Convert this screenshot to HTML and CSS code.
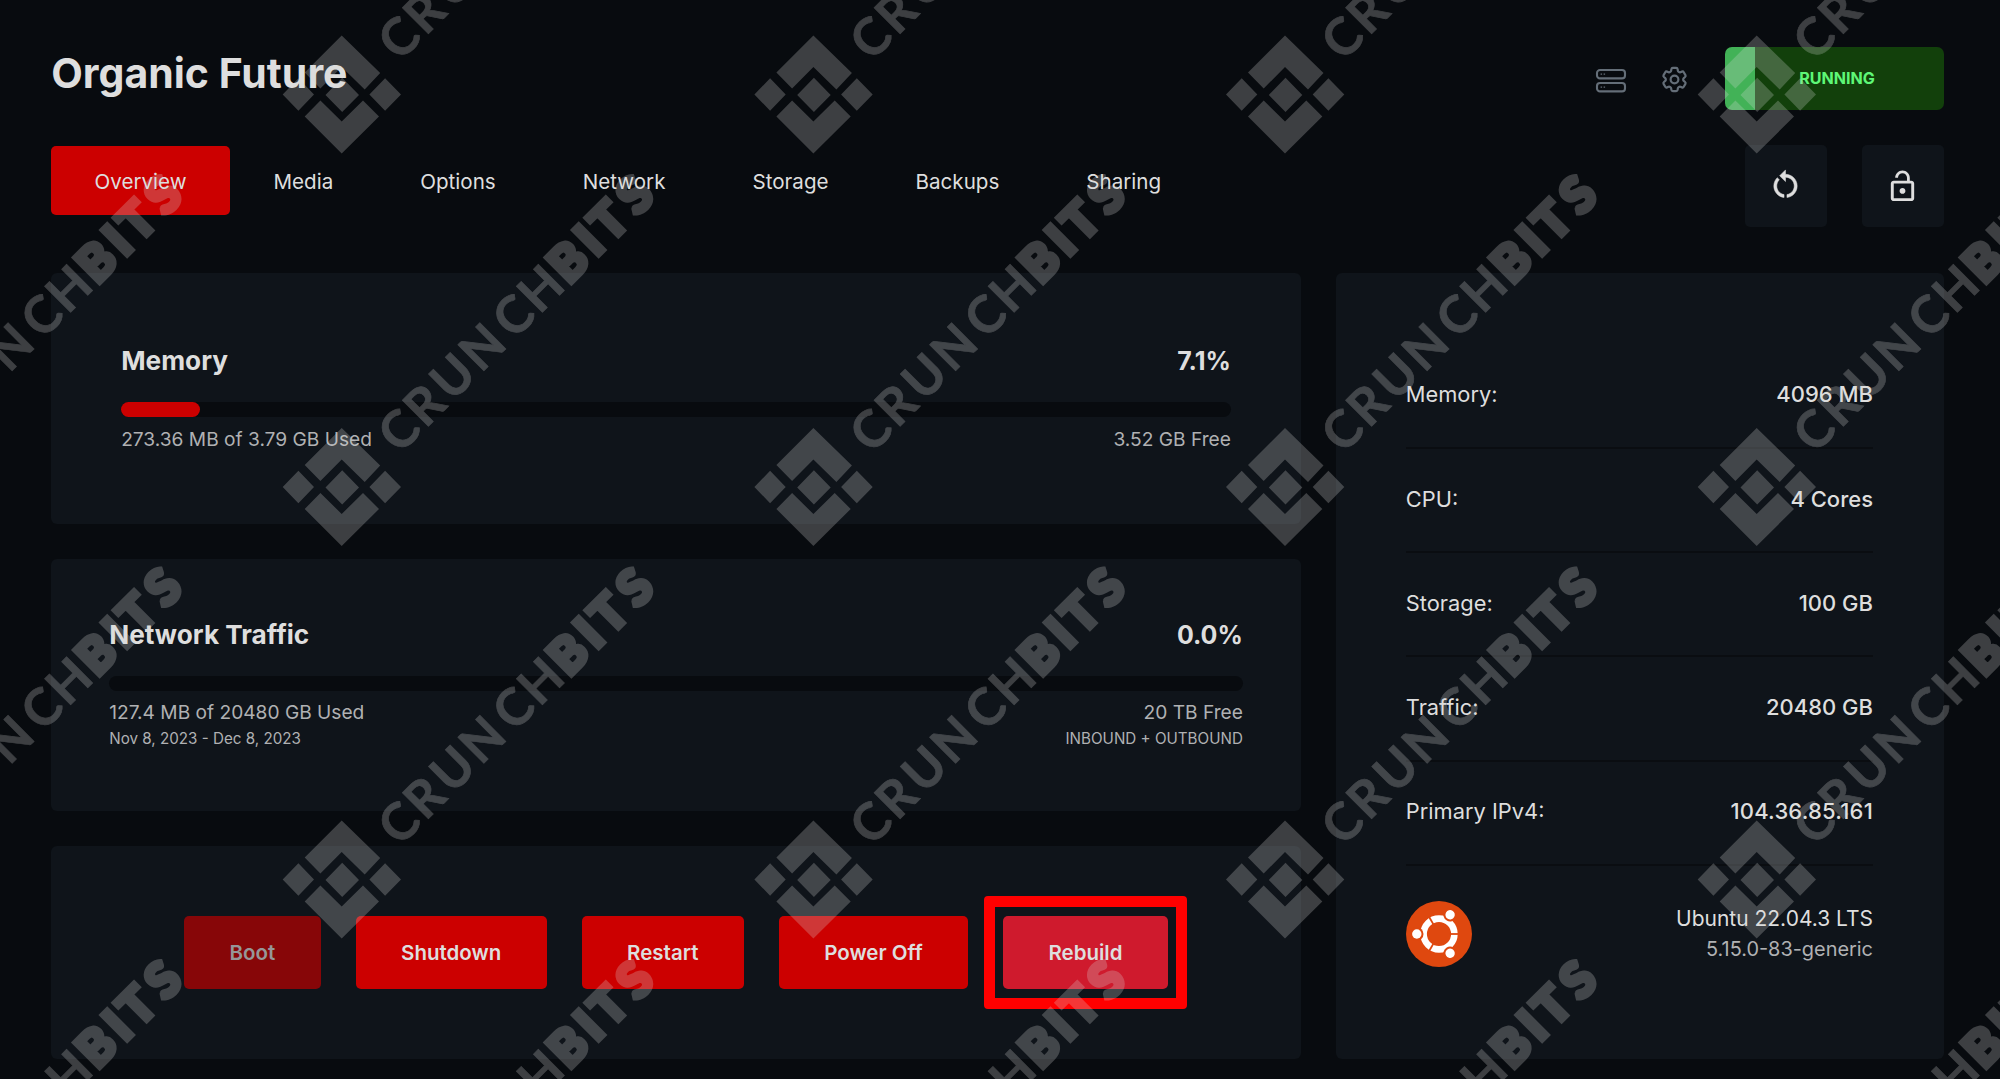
FILE: index.html
```html
<!DOCTYPE html>
<html lang="en">
<head>
<meta charset="utf-8">
<title>Organic Future</title>
<link rel="stylesheet" href="styles.css">
</head>
<body>
<main class="page">
  <header class="header">
    <h1 class="title">Organic Future</h1>
    <div class="header-side">
      <svg class="icon-server" viewBox="0 0 32 26" fill="none" stroke="currentColor" stroke-width="2.1">
        <rect x="2" y="2" width="28" height="8.4" rx="3"/>
        <rect x="2" y="15" width="28" height="8.4" rx="3"/>
        <path d="M5.6 6.2h1.5M8.6 6.2h1.5M5.6 19.2h1.5M8.6 19.2h1.5" stroke-width="1.3"/>
      </svg>
      <svg class="icon-gear" viewBox="0 0 24 24" fill="none" stroke="currentColor" stroke-width="1.7" stroke-linejoin="round">
        <path d="M9.594 3.94c.09-.542.56-.94 1.11-.94h2.593c.55 0 1.02.398 1.11.94l.213 1.281c.063.374.313.686.645.87.074.04.147.083.22.127.325.196.72.257 1.075.124l1.217-.456a1.125 1.125 0 0 1 1.37.49l1.296 2.247a1.125 1.125 0 0 1-.26 1.431l-1.003.827c-.293.241-.438.613-.43.992a7.723 7.723 0 0 1 0 .255c-.008.378.137.75.43.991l1.004.827c.424.35.534.955.26 1.43l-1.298 2.247a1.125 1.125 0 0 1-1.369.491l-1.217-.456c-.355-.133-.75-.072-1.076.124a6.47 6.47 0 0 1-.22.128c-.331.183-.581.495-.644.869l-.213 1.281c-.09.543-.56.94-1.11.94h-2.594c-.55 0-1.019-.398-1.11-.94l-.213-1.281c-.062-.374-.312-.686-.644-.87a6.52 6.52 0 0 1-.22-.127c-.325-.196-.72-.257-1.076-.124l-1.217.456a1.125 1.125 0 0 1-1.369-.49l-1.297-2.247a1.125 1.125 0 0 1 .26-1.431l1.004-.827c.292-.24.437-.613.43-.991a6.932 6.932 0 0 1 0-.255c.007-.38-.138-.751-.43-.992l-1.004-.827a1.125 1.125 0 0 1-.26-1.43l1.297-2.247a1.125 1.125 0 0 1 1.37-.491l1.216.456c.356.133.751.072 1.076-.124.072-.044.146-.086.22-.128.332-.183.582-.495.644-.869l.214-1.28Z"/>
        <circle cx="12" cy="12" r="3"/>
      </svg>
      <div class="status">RUNNING</div>
    </div>
  </header>

  <div class="toolbar">
    <nav class="tabs">
      <a class="tab tab-active">Overview</a>
      <a class="tab">Media</a>
      <a class="tab">Options</a>
      <a class="tab">Network</a>
      <a class="tab">Storage</a>
      <a class="tab">Backups</a>
      <a class="tab">Sharing</a>
    </nav>
    <div class="tools">
      <div class="tool">
        <svg class="tool-icon tool-icon-restart" viewBox="0 0 24 24" fill="currentColor"><path d="M12 5V2L8 6l4 4V7c3.31 0 6 2.69 6 6 0 2.97-2.17 5.43-5 5.91v2.02c3.95-.49 7-3.85 7-7.93 0-4.42-3.58-8-8-8zm-6 8c0-1.65.67-3.15 1.76-4.24L6.34 7.34C4.9 8.79 4 10.79 4 13c0 4.08 3.05 7.44 7 7.93v-2.02c-2.83-.48-5-2.94-5-5.91z"/></svg>
      </div>
      <div class="tool">
        <svg class="tool-icon" viewBox="0 0 24 24" fill="currentColor"><path d="M12 17c1.1 0 2-.9 2-2s-.9-2-2-2-2 .9-2 2 .9 2 2 2zm6-9h-1V6c0-2.76-2.24-5-5-5S7 3.24 7 6h1.9c0-1.71 1.39-3.1 3.1-3.1 1.71 0 3.1 1.39 3.1 3.1v2H6c-1.1 0-2 .9-2 2v10c0 1.1.9 2 2 2h12c1.1 0 2-.9 2-2V10c0-1.1-.9-2-2-2zm0 12H6V10h12v10z"/></svg>
      </div>
    </div>
  </div>

  <div class="content">
    <div class="column">
      <section class="card usage usage-memory">
        <div class="usage-head"><h2>Memory</h2><span class="usage-value">7.1%</span></div>
        <div class="bar"><div class="bar-fill" style="width:7.1%"></div></div>
        <div class="usage-row"><span>273.36 MB of 3.79 GB Used</span><span>3.52 GB Free</span></div>
      </section>
      <section class="card usage usage-traffic">
        <div class="usage-head"><h2>Network Traffic</h2><span class="usage-value">0.0%</span></div>
        <div class="bar"></div>
        <div class="usage-row"><span>127.4 MB of 20480 GB Used</span><span>20 TB Free</span></div>
        <div class="usage-note"><span>Nov 8, 2023 - Dec 8, 2023</span><span>INBOUND + OUTBOUND</span></div>
      </section>
      <section class="card actions">
        <button class="btn btn-disabled">Boot</button>
        <button class="btn">Shutdown</button>
        <button class="btn">Restart</button>
        <button class="btn">Power Off</button>
        <button class="btn btn-hover">Rebuild</button>
      </section>
    </div>

    <aside class="card specs">
      <div class="spec"><span>Memory:</span><b>4096 MB</b></div>
      <div class="spec"><span>CPU:</span><b>4 Cores</b></div>
      <div class="spec"><span>Storage:</span><b>100 GB</b></div>
      <div class="spec"><span>Traffic:</span><b>20480 GB</b></div>
      <div class="spec"><span>Primary IPv4:</span><b class="spec-ip">104.36.85.161</b></div>
      <div class="os">
        <svg class="os-logo" viewBox="-33 -33 66 66">
          <circle r="33" fill="#df480f"/>
          <circle r="15.4" fill="none" stroke="#fff" stroke-width="6.6"/>
          <g id="arm">
            <path d="M10 0h10" stroke="#df480f" stroke-width="1.8"/>
            <circle cx="-22.2" r="6.7" fill="#df480f"/>
            <circle cx="-22.2" r="4.7" fill="#fff"/>
          </g>
          <use href="#arm" transform="rotate(120)"/>
          <use href="#arm" transform="rotate(240)"/>
        </svg>
        <div class="os-text">
          <span class="os-name">Ubuntu 22.04.3 LTS</span>
          <span class="os-kernel">5.15.0-83-generic</span>
        </div>
      </div>
    </aside>
  </div>
</main>

<svg class="watermark" viewBox="0 0 2000 1079">
  <defs>
    <g id="mark">
      <path d="M0-59 38.5-21.5 23-5 0-27.5-21.3-6-37-22ZM.5-16.8 17.3.4.5 17.5-16.2.4ZM-59 0-43.3-16.2-27.7 0-43.3 16.2ZM27.7 0 43.4-16.2 59.3 0 43.4 16.2ZM-37 22-21.3 6 0 27 21.3 6 37.3 22 0 59Z"/>
      <g transform="rotate(-45)">
        <text class="wm-light" y="18.4" x="80.5 116.5 156.5 198.2 242.4 281">CRUNCH</text>
        <text class="wm-heavy" y="17.8" x="319.5 349.4 377 413.5">BITS</text>
      </g>
    </g>
    <g id="mark-row">
      <use href="#mark" x="-130"/>
      <use href="#mark" x="341.7"/>
      <use href="#mark" x="813.4"/>
      <use href="#mark" x="1285"/>
      <use href="#mark" x="1756.7"/>
    </g>
  </defs>
  <use href="#mark-row" y="94.5"/>
  <use href="#mark-row" y="487"/>
  <use href="#mark-row" y="879.5"/>
  <use href="#mark-row" y="1272"/>
</svg>
</body>
</html>
```
FILE: styles.css
```css
* { box-sizing: border-box; }

body {
  margin: 0;
  background: #080b0f;
  color: #dedede;
  font-family: Inter, "Liberation Sans", sans-serif;
  position: relative;
}

.page {
  height: 1079px;
  padding: 47px 56.5px 20px 51.2px;
  display: flex;
  flex-direction: column;
  overflow: hidden;
}

.header {
  height: 63px;
  display: flex;
  justify-content: space-between;
}

.title {
  margin: 0;
  font-size: 41px;
  font-weight: 700;
  line-height: 53px;
}

.header-side {
  display: flex;
  align-items: center;
  color: #646e78;
}

.icon-server { width: 32px; height: 26px; margin: 4px 32px 0 0; }
.icon-gear { width: 31px; height: 31px; margin: 1px 35px 0 0; }

.status {
  width: 219px;
  height: 63px;
  border-radius: 7px;
  background: linear-gradient(90deg, #42b257 29.5px, #12400b 29.5px);
  color: #5ef777;
  font-size: 16.1px;
  font-weight: 700;
  line-height: 62px;
  text-align: center;
  padding-left: 6px;
}

.toolbar {
  margin-top: 35px;
  height: 82px;
  display: flex;
  justify-content: space-between;
}

.tabs { display: flex; margin-top: 1px; }

.tab {
  height: 69px;
  padding: 1px 43.35px 0;
  border-radius: 5px;
  font-size: 20.6px;
  line-height: 69px;
}

.tab + .tab { padding: 1px 43.5px 0; }

.tab-active { background: #cc0000; }

.tools { display: flex; gap: 35px; }

.tool {
  width: 82px;
  height: 82px;
  border-radius: 5px;
  background: #0f141a;
  display: grid;
  place-items: center;
}

.tool-icon { width: 35px; height: 35px; display: block; }
.tool-icon-restart { margin-bottom: 4px; stroke: currentColor; stroke-width: .35; }

.content {
  margin-top: 46px;
  flex: 1;
  display: grid;
  grid-template-columns: 1249.7px 1fr;
  gap: 35.4px;
}

.column {
  display: grid;
  grid-template-rows: 251.4px 251.4px 1fr;
  gap: 35px;
}

.card {
  background: #0f141a;
  border-radius: 6px;
}

.usage-memory { padding: 70px 70px 0; }
.usage-traffic { padding: 57.5px 58px 0; }

.usage-head {
  display: flex;
  justify-content: space-between;
  font-size: 26.2px;
  font-weight: 700;
  line-height: 36px;
}

.usage-head h2 { margin: 0; font: inherit; }
.usage-value { font-size: 25px; }

.bar {
  height: 15px;
  margin-top: 23px;
  border-radius: 8px;
  background: #080b0f;
}

.bar-fill { height: 100%; border-radius: 8px; background: #cc0000; }

.usage-row, .usage-note {
  display: flex;
  justify-content: space-between;
  color: #b0b1b3;
}

.usage-row { margin-top: 7px; font-size: 19.15px; line-height: 30px; }
.usage-traffic .usage-row { margin-top: 6.5px; }
.usage-note { font-size: 15.2px; line-height: 24px; }

.actions {
  display: flex;
  align-items: center;
  justify-content: center;
  gap: 35px;
}

.btn {
  height: 73px;
  padding: 0 45.4px;
  border: 0;
  border-radius: 5px;
  background: #cc0000;
  color: #dedede;
  font: 600 20.5px/73px Inter, "Liberation Sans", sans-serif;
}

.btn-disabled { background: #870608; color: #969698; }

.btn-hover { position: relative; background: #cf1a2d; }

/* thick frame that calls out the button */
.btn-hover::after {
  content: "";
  position: absolute;
  inset: -20px -19px;
  border: 11.5px solid #ff0000;
  border-radius: 4px;
}

.specs { padding: 71.5px 70.5px 0 69.5px; }

.spec {
  height: 104.25px;
  padding-bottom: 2.5px;
  border-bottom: 2px solid #0a0d11;
  display: flex;
  justify-content: space-between;
  align-items: center;
  font-size: 21.85px;
}

.spec b { font-weight: 500; font-size: 22px; }
.spec .spec-ip { letter-spacing: .2px; }

.os {
  margin-top: 35.5px;
  display: flex;
  justify-content: space-between;
  align-items: center;
}

.os-logo { width: 66px; height: 66px; display: block; }

.os-text {
  display: flex;
  flex-direction: column;
  text-align: right;
  line-height: 31px;
}

.os-name { font-size: 21px; }
.os-kernel { font-size: 19.9px; color: #b0b1b3; }

/* repeated diagonal brand overlay */
.watermark {
  position: absolute;
  inset: 0;
  width: 2000px;
  height: 1079px;
  fill: #dadada;
  stroke: #dadada;
  stroke-width: 0;
  opacity: .25;
  pointer-events: none;
}

.wm-light, .wm-heavy {
  font-family: Lato, sans-serif;
  text-anchor: middle;
}

.wm-light { font-size: 51px; font-weight: 700; stroke-width: .7px; }
.wm-heavy { font-size: 49px; font-weight: 900; stroke-width: 5px; }
```
